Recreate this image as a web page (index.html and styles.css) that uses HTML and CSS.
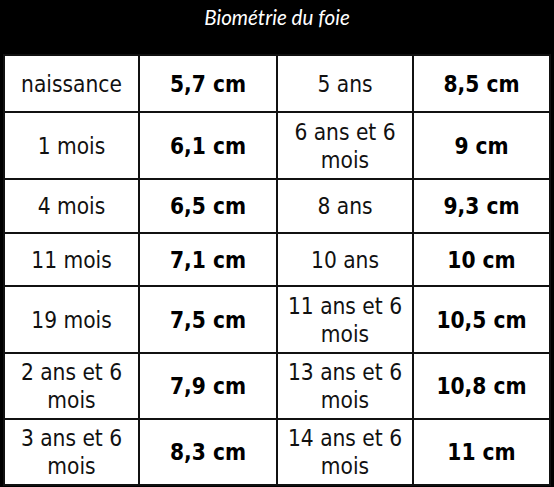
FILE: index.html
```html
<!DOCTYPE html>
<html lang="fr">
<head>
<meta charset="utf-8">
<title>Biométrie du foie</title>
<link rel="stylesheet" href="styles.css">
</head>
<body>
<div class="page">
  <header class="title-bar"><h1 class="title">Biométrie du foie</h1></header>
  <table class="bio">
    <colgroup>
      <col class="c1"><col class="c2"><col class="c3"><col class="c4">
    </colgroup>
    <tbody>
      <tr class="r1"><td>naissance</td><td class="v">5,7 cm</td><td>5 ans</td><td class="v">8,5 cm</td></tr>
      <tr class="r2"><td>1 mois</td><td class="v">6,1 cm</td><td>6 ans et 6<br>mois</td><td class="v">9 cm</td></tr>
      <tr class="r3"><td>4 mois</td><td class="v">6,5 cm</td><td>8 ans</td><td class="v">9,3 cm</td></tr>
      <tr class="r4"><td>11 mois</td><td class="v">7,1 cm</td><td>10 ans</td><td class="v">10 cm</td></tr>
      <tr class="r5"><td>19 mois</td><td class="v">7,5 cm</td><td>11 ans et 6<br>mois</td><td class="v">10,5 cm</td></tr>
      <tr class="r6"><td>2 ans et 6<br>mois</td><td class="v">7,9 cm</td><td>13 ans et 6<br>mois</td><td class="v">10,8 cm</td></tr>
      <tr class="r7"><td>3 ans et 6<br>mois</td><td class="v">8,3 cm</td><td>14 ans et 6<br>mois</td><td class="v">11 cm</td></tr>
    </tbody>
  </table>
</div>
</body>
</html>
```
FILE: styles.css
```css
html, body {
  margin: 0;
  padding: 0;
  background: #000;
}
.page {
  width: 554px;
  height: 487px;
  background: #000;
  overflow: hidden;
}
.title-bar {
  height: 54px;
  display: flex;
  justify-content: center;
  padding-top: 4px;
  box-sizing: border-box;
}
.title {
  margin: 0;
  font-family: "Lato", "Open Sans", sans-serif;
  font-style: italic;
  font-weight: normal;
  font-size: 20.6px;
  line-height: 26px;
  color: #fff;
}
.bio {
  margin-left: 3px;
  width: 546px;
  border-collapse: collapse;
  table-layout: fixed;
  border: 2px solid #3a3a3a;
  font-family: "DejaVu Sans Condensed", "DejaVu Sans", sans-serif;
  font-size: 22.5px;
  color: #111;
}
.c1 { width: 135px; }
.c2 { width: 138px; }
.c3 { width: 136px; }
.c4 { width: 137px; }
.bio td {
  background: #fff;
  border: 2px solid #111;
  text-align: center;
  vertical-align: middle;
  padding: 0 2px;
  line-height: 28px;
}
.bio td.v { font-weight: bold; color: #000; }
.r1 { height: 57px; }
.r2 { height: 67px; }
.r3 { height: 54px; }
.r4 { height: 53px; }
.r5 { height: 67px; }
.r6 { height: 66px; }
.r7 { height: 66px; }
```
